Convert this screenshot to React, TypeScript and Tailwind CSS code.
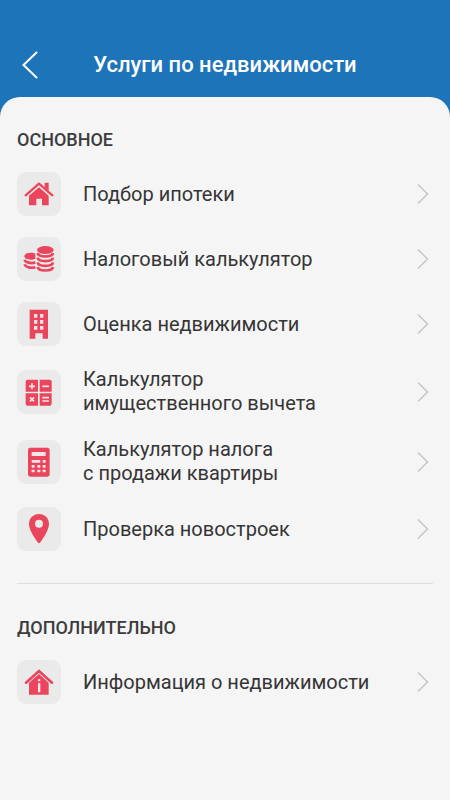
import React from "react";

interface Service {
  id: string;
  lines: string[];
  icon: React.ReactNode;
}

const HouseIcon = () => (
  <>
    <path d="M48 92 88 57l40 35" fill="none" stroke="#e9465d" strokeWidth="7" strokeLinecap="round" strokeLinejoin="round" />
    <path d="M105 54h12v24l-12-10z" />
    <path d="M58 93 88 68l29 25v29H97v-20H80v20H58z" />
  </>
);

const CoinsIcon = () => (
  <>
    <path d="M44 80c0-7 8-11 19-11 6 0 11 1 14 3v15c-4 2-8 3-14 3-11 0-19-4-19-10z" />
    <g fill="none" stroke="#e9465d" strokeWidth="8">
      <path d="M45 90c2 9 18 12 32 9" />
      <path d="M45 104c2 9 18 12 32 9" />
      <path d="M84 70c2 14 44 14 46 0" />
      <path d="M84 84c2 14 44 14 46 0" />
      <path d="M84 98c2 14 44 14 46 0" />
      <path d="M84 112c2 14 44 14 46 0" />
    </g>
    <ellipse cx="107" cy="61" rx="25" ry="12" />
  </>
);

const BuildingIcon = () => (
  <>
    <path d="M60 45h55v87H99v-16H77v16H60z" />
    <g fill="#f8e4e7">
      <path d="M73 58h10v11H73zM91 58h10v11H91z" />
      <path d="M73 76h10v11H73zM91 76h10v11H91z" />
      <path d="M73 94h10v11H73zM91 94h10v11H91z" />
    </g>
  </>
);

const OperationsIcon = () => (
  <>
    <path d="M54 51h31v36H48V57q0-6 6-6z" />
    <path d="M90 51h30q6 0 6 6v30H90z" />
    <path d="M48 92h37v37H54q-6 0-6-6z" />
    <path d="M90 92h36v31q0 6-6 6H90z" />
    <g fill="none" stroke="#f8e4e7" strokeWidth="5">
      <path d="M58 71h18M67 62v18" />
      <path d="M98 71h20" />
      <path d="m61 104 12 12M73 104l-12 12" />
      <path d="M98 105h20M98 115h20" />
    </g>
  </>
);

const CalculatorIcon = () => (
  <>
    <rect x="55" y="45" width="65" height="87" rx="7" />
    <g fill="#f8e4e7">
      <rect x="66" y="58" width="42" height="12" rx="1" />
      <rect x="66" y="82" width="26" height="8" rx="2" />
      <rect x="99" y="82" width="9" height="8" rx="2" />
      <rect x="66" y="97" width="9" height="8" rx="2" />
      <rect x="83" y="97" width="9" height="8" rx="2" />
      <rect x="99" y="97" width="9" height="8" rx="2" />
      <rect x="66" y="111" width="9" height="8" rx="2" />
      <rect x="83" y="111" width="9" height="8" rx="2" />
      <rect x="99" y="111" width="9" height="8" rx="2" />
    </g>
  </>
);

const PinIcon = () => (
  <>
    <path d="M88 43c17 0 30 13 30 30 0 16-14 38-26 55q-4 6-8 0C72 111 58 89 58 73c0-17 13-30 30-30z" />
    <circle cx="88" cy="72" r="12" fill="#ececec" />
  </>
);

const HouseInfoIcon = () => (
  <>
    <path d="M49 90 88 55l39 35" fill="none" stroke="#e9465d" strokeWidth="8" strokeLinecap="round" strokeLinejoin="miter" />
    <path d="M58 90 88 64l29 26v36H58z" />
    <g fill="#f8e4e7">
      <rect x="85" y="79" width="7" height="7" rx="2" />
      <rect x="85" y="91" width="7" height="28" rx="1" />
    </g>
  </>
);

const mainServices: Service[] = [
  { id: "mortgage", lines: ["Подбор ипотеки"], icon: <HouseIcon /> },
  { id: "tax", lines: ["Налоговый калькулятор"], icon: <CoinsIcon /> },
  { id: "valuation", lines: ["Оценка недвижимости"], icon: <BuildingIcon /> },
  { id: "deduction", lines: ["Калькулятор", "имущественного вычета"], icon: <OperationsIcon /> },
  { id: "sale-tax", lines: ["Калькулятор налога", "с продажи квартиры"], icon: <CalculatorIcon /> },
  { id: "new-buildings", lines: ["Проверка новостроек"], icon: <PinIcon /> },
];

const extraServices: Service[] = [
  { id: "info", lines: ["Информация о недвижимости"], icon: <HouseInfoIcon /> },
];

function ServiceRow({ service }: { service: Service }) {
  return (
    <li>
      <a href={`#${service.id}`} className="flex items-center">
        <span className="w-11 h-11 shrink-0 rounded-[9px] bg-[#eaeaea]">
          <svg viewBox="22 22 132 132" className="w-11 h-11" fill="#e9465d" aria-hidden="true">
            {service.icon}
          </svg>
        </span>
        <span className="ml-[22px] flex-1 pb-px text-[20px] leading-6 text-[#353535]">
          {service.lines.map((line) => (
            <span key={line} className="block">
              {line}
            </span>
          ))}
        </span>
        <svg viewBox="0 0 12 22" className="w-3 h-[22px] mr-1 shrink-0" fill="none" stroke="#c6c6c6" strokeWidth="1.5" aria-hidden="true">
          <path d="M1 1.5 10.5 11 1 20.5" />
        </svg>
      </a>
    </li>
  );
}

function ServiceSection({ title, services }: { title: string; services: Service[] }) {
  return (
    <section>
      <h2 className="text-[18px] leading-6 font-medium text-[#3c3c3c]">{title}</h2>
      <ul className="mt-5 flex flex-col gap-[21px]">
        {services.map((service) => (
          <ServiceRow key={service.id} service={service} />
        ))}
      </ul>
    </section>
  );
}

export default function App() {
  return (
    <div className="min-h-screen flex flex-col bg-[#1e74b8] font-['Roboto',sans-serif]">
      <header className="grid grid-cols-[44px_1fr_44px] items-center px-2 pt-[43px] pb-[10px]">
        <button type="button" aria-label="Назад" className="w-11 h-11 flex items-center justify-center cursor-pointer">
          <svg viewBox="0 0 18 28" className="w-[18px] h-7" fill="none" stroke="#fff" strokeWidth="2" strokeLinecap="round" aria-hidden="true">
            <path d="M15.500 1.500 2.500 14l13 12.500" />
          </svg>
        </button>
        <h1 className="text-center text-[22px] leading-7 font-medium text-white">Услуги по недвижимости</h1>
      </header>

      <main className="flex-1 rounded-t-[20px] bg-[#f5f5f5] px-[17px] pt-[31px] pb-8">
        <ServiceSection title="ОСНОВНОЕ" services={mainServices} />
        <hr className="my-8 border-[#dedede]" />
        <ServiceSection title="ДОПОЛНИТЕЛЬНО" services={extraServices} />
      </main>
    </div>
  );
}
